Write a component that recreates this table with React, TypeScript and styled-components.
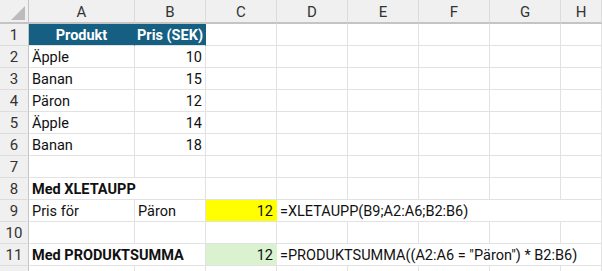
import React from 'react';
import styled, { createGlobalStyle } from 'styled-components';

type Align = 'left' | 'right' | 'center';

interface ICell {
  col: number; // 0 = A
  value?: string;
  align?: Align;
  bold?: boolean;
  fill?: string;
  color?: string;
  span?: number;
}

const GlobalStyle = createGlobalStyle`
  html, body {
    margin: 0;
    padding: 0;
    background: #ffffff;
  }

  body {
    font-family: Roboto, 'Liberation Sans', Arial, sans-serif;
    overflow: hidden;
  }
`;

const COLUMNS = ['A', 'B', 'C', 'D', 'E', 'F', 'G', 'H'];

const ROWS: ICell[][] = [
  [
    { col: 0, value: 'Produkt', align: 'center', bold: true, fill: '#156082', color: '#ffffff' },
    { col: 1, value: 'Pris (SEK)', align: 'center', bold: true, fill: '#156082', color: '#ffffff' },
  ],
  [{ col: 0, value: 'Äpple' }, { col: 1, value: '10', align: 'right' }],
  [{ col: 0, value: 'Banan' }, { col: 1, value: '15', align: 'right' }],
  [{ col: 0, value: 'Päron' }, { col: 1, value: '12', align: 'right' }],
  [{ col: 0, value: 'Äpple' }, { col: 1, value: '14', align: 'right' }],
  [{ col: 0, value: 'Banan' }, { col: 1, value: '18', align: 'right' }],
  [],
  [{ col: 0, value: 'Med XLETAUPP', bold: true, span: 2 }],
  [
    { col: 0, value: 'Pris för' },
    { col: 1, value: 'Päron' },
    { col: 2, value: '12', align: 'right', fill: '#ffff00' },
    { col: 3, value: '=XLETAUPP(B9;A2:A6;B2:B6)', span: 5 },
  ],
  [],
  [
    { col: 0, value: 'Med PRODUKTSUMMA', bold: true, span: 2 },
    { col: 2, value: '12', align: 'right', fill: '#daf2d0' },
    { col: 3, value: '=PRODUKTSUMMA((A2:A6 = "Päron") * B2:B6)', span: 5 },
  ],
];

// fill empty columns so every row has a cell per column
const buildRow = (cells: ICell[]): ICell[] => {
  const out: ICell[] = [];
  let col = 0;
  while (col < COLUMNS.length) {
    const found = cells.find((c) => c.col === col);
    if (found) {
      out.push(found);
      col += found.span ?? 1;
    } else {
      out.push({ col });
      col += 1;
    }
  }
  return out;
};

const App: React.FC = () => (
  <>
    <GlobalStyle />
    <Sheet>
      <Corner>
        <Triangle />
      </Corner>
      {COLUMNS.map((letter) => (
        <ColumnHeader key={letter}>{letter}</ColumnHeader>
      ))}
      {ROWS.map((cells, i) => (
        <React.Fragment key={i}>
          <RowHeader>{i + 1}</RowHeader>
          {buildRow(cells).map((cell) => (
            <Cell
              key={cell.col}
              $align={cell.align ?? 'left'}
              $bold={cell.bold}
              $fill={cell.fill}
              $color={cell.color}
              $span={cell.span ?? 1}
            >
              {cell.value}
            </Cell>
          ))}
        </React.Fragment>
      ))}
      {/* partly visible row below the data */}
      <RowHeader />
      {COLUMNS.map((letter) => (
        <Cell key={letter} $align="left" $span={1} />
      ))}
    </Sheet>
  </>
);

const Sheet = styled.div`
  display: grid;
  grid-template-columns: 29px 106px repeat(6, 71px) 1fr;
  grid-template-rows: 24px;
  grid-auto-rows: 22px;
  width: 602px;
  height: 271px;
  overflow: hidden;
  font-size: 14.5px;
  color: #111111;
`;

const HeaderBase = styled.div`
  display: flex;
  align-items: center;
  justify-content: center;
  background: #f0f0f0;
  color: #333333;
  font-size: 15px;
  box-sizing: border-box;
`;

const Corner = styled(HeaderBase)`
  position: relative;
  border-bottom: 2px solid #c4c4c4;
  border-right: 1px solid #c4c4c4;
`;

const Triangle = styled.div`
  position: absolute;
  right: 3px;
  bottom: 2px;
  width: 0;
  height: 0;
  border-left: 14px solid transparent;
  border-bottom: 14px solid #bcbcbc;
`;

const ColumnHeader = styled(HeaderBase)`
  border-bottom: 2px solid #c4c4c4;
  border-right: 1px solid #dcdcdc;
  padding-top: 1px;
`;

const RowHeader = styled(HeaderBase)`
  border-right: 1px solid #c4c4c4;
  border-bottom: 1px solid #dcdcdc;
`;

const Cell = styled.div<{
  $align: Align;
  $bold?: boolean;
  $fill?: string;
  $color?: string;
  $span: number;
}>`
  grid-column: span ${({ $span }) => $span};
  display: flex;
  align-items: center;
  justify-content: ${({ $align }) =>
    $align === 'right' ? 'flex-end' : $align === 'center' ? 'center' : 'flex-start'};
  padding: 1px 3px 0;
  box-sizing: border-box;
  white-space: nowrap;
  overflow: hidden;
  font-weight: ${({ $bold }) => ($bold ? 700 : 400)};
  background: ${({ $fill }) => $fill ?? '#ffffff'};
  color: ${({ $color }) => $color ?? '#111111'};
  border-right: 1px solid ${({ $fill }) => $fill ?? '#e2e2e2'};
  border-bottom: 1px solid #e2e2e2;
`;

export default App;
